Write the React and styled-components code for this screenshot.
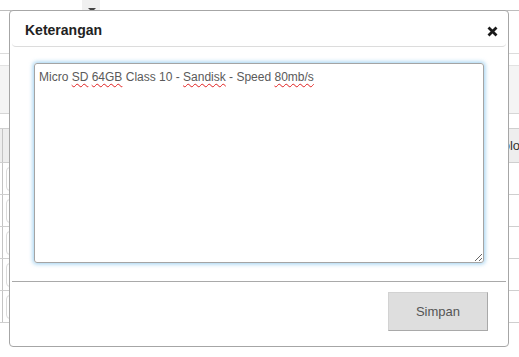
import React from "react";
import styled, { createGlobalStyle } from "styled-components";

const Global = createGlobalStyle`
  html, body { margin: 0; padding: 0; background: #fff; overflow: hidden; }
  body { font-family: "Liberation Sans", Arial, sans-serif; font-size: 13px; color: #333; }
`;

const Page = styled.div`
  width: 519px;
  height: 357px;
  display: flex;
  flex-direction: column;
`;

const TopBar = styled.div`
  height: 10px;
  border-bottom: 1px solid #bdbdbd;
  display: flex;
  padding-left: 82px;
`;

const CaretCell = styled.div`
  width: 18px;
  background: #f0f0f0;
  position: relative;
  overflow: hidden;
`;

const Caret = styled.span`
  position: absolute;
  left: 6px;
  top: 8px;
  border-left: 4px solid transparent;
  border-right: 4px solid transparent;
  border-top: 4px solid #444;
`;

const Section = styled.div`
  height: 42px;
  border-bottom: 1px solid #dcdcdc;
`;

const Band = styled.div`
  margin-top: 11px;
  height: 47px;
  background: #f4f4f4;
  border-top: 1px solid #e2e2e2;
  border-bottom: 1px solid #d6d6d6;
`;

const Table = styled.div`
  margin-top: 14px;
  border-top: 1px solid #cfcfcf;
  display: flex;
  flex-direction: column;
`;

const Row = styled.div`
  display: grid;
  grid-template-columns: 3px 491px 1fr;
  height: ${(p) => (p.$head ? 33 : 31)}px;
  background: ${(p) => (p.$head ? "#eeeeee" : "#fff")};
  border-bottom: 1px solid #cfcfcf;
`;

const Lead = styled.div`
  border-right: 1px solid #c4c4c4;
`;

const Cell = styled.div`
  display: flex;
  align-items: center;
  padding-left: ${(p) => p.$pad || 0}px;
  white-space: nowrap;
  overflow: hidden;
  color: #333;
  font-size: 13px;
`;

const CellInput = styled.div`
  width: 200px;
  height: 22px;
  border: 1px solid #dadada;
  border-radius: 4px;
  background: #fff;
`;

const Modal = styled.div`
  position: fixed;
  left: 9px;
  top: 10px;
  width: 500px;
  height: 337px;
  box-sizing: border-box;
  background: #fff;
  border: 1px solid #a6a6a6;
  border-radius: 4px;
  display: flex;
  flex-direction: column;
`;

const Header = styled.div`
  margin: 0 2px;
  padding: 11px 8px 8px 13px;
  border-bottom: 1px solid #dcdcdc;
  border-radius: 0 0 4px 4px;
  display: flex;
  align-items: center;
  justify-content: space-between;
`;

const Title = styled.span`
  font-size: 14px;
  font-weight: bold;
  color: #222;
  line-height: 16px;
`;

const Close = styled.button`
  border: 0;
  background: none;
  padding: 0;
  margin: 0;
  width: 11px;
  height: 11px;
  display: flex;
  cursor: pointer;
  margin-top: 3px;
`;

const Body = styled.div`
  padding: 16px 24px 18px 24px;
`;

const TextBox = styled.div`
  box-sizing: border-box;
  width: 450px;
  height: 200px;
  border: 1px solid #a4a4a4;
  border-radius: 3px;
  box-shadow: 0 0 4px 1px rgba(102, 180, 230, 0.65);
  padding: 6px 4px;
  font-size: 12px;
  line-height: 15px;
  color: #5a5a5a;
  resize: both;
  overflow: auto;
  outline: none;
  white-space: pre-wrap;
`;

const Misspelt = styled.span`
  text-decoration: underline wavy #e02020;
  text-decoration-thickness: 1px;
  text-underline-offset: 2px;
`;

const Footer = styled.div`
  margin: 0 2px;
  border-top: 1px solid #a9a9a9;
  padding: 10px 18px 0 0;
  display: flex;
  justify-content: flex-end;
`;

const SaveButton = styled.button`
  width: 100px;
  height: 39px;
  box-sizing: border-box;
  background: #dedede;
  border: 1px solid;
  border-color: #d2d2d2 #a9a9a9 #a9a9a9 #d2d2d2;
  font-family: "Liberation Sans", Arial, sans-serif;
  font-size: 13px;
  color: #555;
  cursor: pointer;
`;

export default function App() {
  const rows = [0, 1, 2, 3, 4];
  return (
    <>
      <Global />
      <Page>
        <TopBar>
          <CaretCell>
            <Caret />
          </CaretCell>
        </TopBar>
        <Section />
        <Band />
        <Table>
          <Row $head>
            <Lead />
            <Cell />
            <Cell>Kolom</Cell>
          </Row>
          {rows.map((r) => (
            <Row key={r}>
              <Lead />
              <Cell $pad={3}>
                <CellInput />
              </Cell>
              <Cell />
            </Row>
          ))}
        </Table>
      </Page>
      <Modal role="dialog" aria-label="Keterangan">
        <Header>
          <Title>Keterangan</Title>
          <Close aria-label="Tutup">
            <svg width="11" height="11" viewBox="0 0 11 11">
              <path
                d="M1.5 1.5 L9.5 9.5 M9.5 1.5 L1.5 9.5"
                stroke="#1a1a1a"
                strokeWidth="2.8"
                strokeLinecap="butt"
              />
            </svg>
          </Close>
        </Header>
        <Body>
          <TextBox role="textbox" aria-multiline="true" spellCheck={false}>
            Micro <Misspelt>SD</Misspelt> <Misspelt>64GB</Misspelt> Class 10 -{" "}
            <Misspelt>Sandisk</Misspelt> - Speed <Misspelt>80mb/s</Misspelt>
          </TextBox>
        </Body>
        <Footer>
          <SaveButton>Simpan</SaveButton>
        </Footer>
      </Modal>
    </>
  );
}
